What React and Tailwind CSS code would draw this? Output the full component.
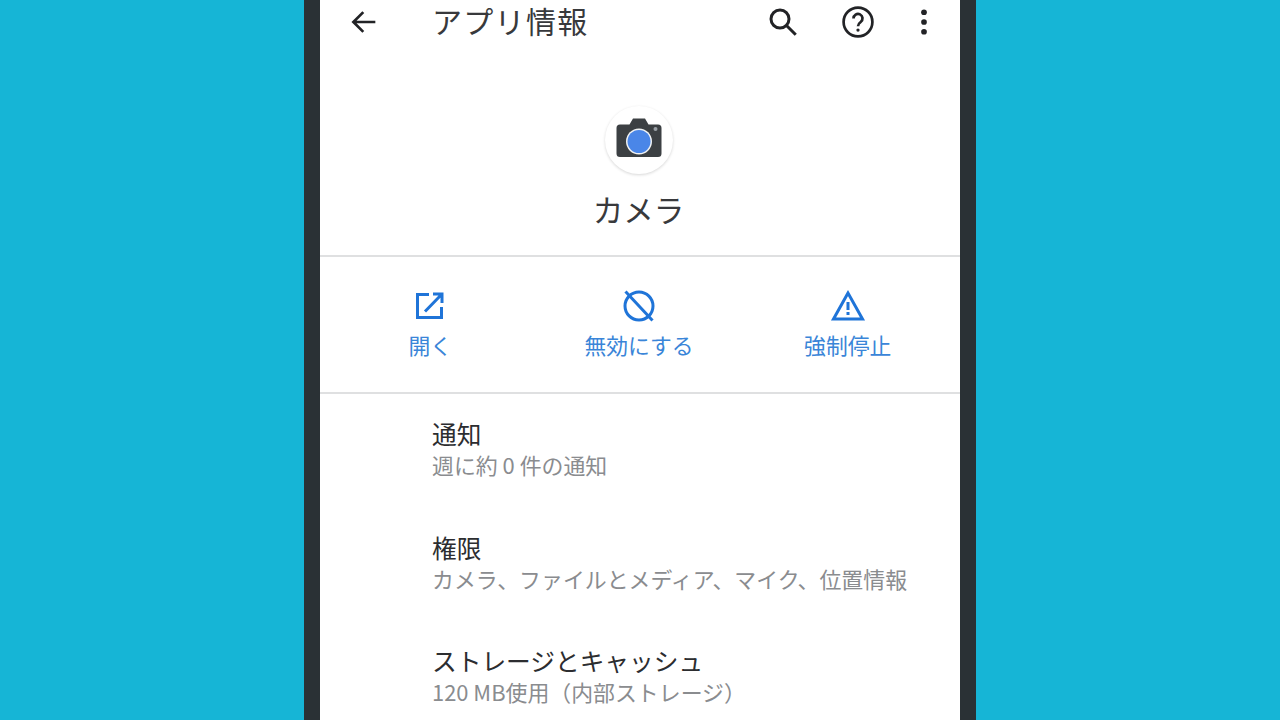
import React from 'react';

const jp = { fontFamily: '"Noto Sans CJK JP", "Noto Sans", sans-serif' };

const ActionButton = ({ icon, label }) => (
  <div className="flex-1 flex flex-col items-center">
    <div className="h-[34px] flex items-center justify-center">{icon}</div>
    <div className="mt-[6px] text-[21.8px] leading-[32px] text-[#3a85d8] font-normal">{label}</div>
  </div>
);

const InfoRow = ({ title, sub }) => (
  <div className="h-[113.5px] pl-[112px]">
    <div className="text-[24.7px] leading-[32px] text-[#2c2d30] font-normal whitespace-nowrap">{title}</div>
    <div className="mt-[1px] text-[21.9px] leading-[30px] text-[#8a8c8f] font-normal whitespace-nowrap">{sub}</div>
  </div>
);

export default function App() {
  return (
    <div className="w-[1280px] h-[720px] overflow-hidden bg-[#16b5d6] flex justify-center" style={jp}>
      <div className="w-[672px] h-full bg-[#2a3135] px-4">
        <div className="w-[640px] h-full bg-white">
          {/* toolbar */}
          <div className="h-[44px] flex items-center">
            <svg className="ml-[27px]" width="34" height="34" viewBox="0 0 24 24" fill="none" stroke="#222326" strokeWidth="1.9">
              <path d="M20 12H4.500M11.500 5l-7 7 7 7" />
            </svg>
            <div className="ml-[51px] mb-[4px] text-[30px] leading-[36px] text-[#38393c] font-normal tracking-[1.3px]">アプリ情報</div>
            <div className="ml-auto flex items-center">
              <svg className="-mt-[1px]" width="36" height="36" viewBox="0 0 24 24" fill="none" stroke="#222326" strokeWidth="2">
                <circle cx="10" cy="10" r="6" />
                <path d="M14.500 14.500L20.500 20.500" />
              </svg>
              <svg className="ml-[39px]" width="36" height="36" viewBox="0 0 24 24" fill="none" stroke="#222326" strokeWidth="1.8">
                <circle cx="12" cy="12" r="9.600" />
                <path d="M9 9.600a3 3 0 1 1 4.800 2.400c-1.100.8-1.800 1.400-1.800 2.800" />
                <circle cx="12" cy="17.400" r="1.100" fill="#222326" stroke="none" />
              </svg>
              <svg className="ml-[30px] mr-[18px]" width="36" height="36" viewBox="0 0 24 24" fill="#222326">
                <circle cx="12" cy="5.500" r="1.900" />
                <circle cx="12" cy="12" r="1.900" />
                <circle cx="12" cy="18.500" r="1.900" />
              </svg>
            </div>
          </div>

          {/* app header */}
          <div className="h-[213px] border-b-2 border-[#dfe0e1] flex flex-col items-center pr-[3px]">
            <div className="mt-[62px] w-[68px] h-[68px] rounded-full bg-white shadow-[0_1px_3px_rgba(0,0,0,0.16)] flex items-center justify-center">
              <svg width="46" height="40" viewBox="0 0 46 40" className="mb-[5px]">
                <path d="M4 6.500h9.500L17 0.500h12L32.500 6.500H42a3.500 3.500 0 0 1 3.500 3.500v25.500a3.500 3.500 0 0 1-3.500 3.500H4a3.500 3.500 0 0 1-3.500-3.500V10A3.500 3.500 0 0 1 4 6.500z" fill="#3c4043" />
                <circle cx="23" cy="23.500" r="13" fill="#f1f3f4" />
                <circle cx="23" cy="23.500" r="11.500" fill="#4a86e8" />
                <circle cx="39.500" cy="11" r="2" fill="#9aa0a6" />
              </svg>
            </div>
            <div className="mt-[13px] text-[30.5px] leading-[44px] text-[#38393c] font-normal">カメラ</div>
          </div>

          {/* actions */}
          <div className="h-[137px] border-b-2 border-[#dfe0e1] flex pt-[32px] pl-[6px] pr-[8px]">
            <ActionButton
              label="開く"
              icon={
                <svg width="36" height="36" viewBox="0 0 36 36" fill="none" stroke="#1f74d8" strokeWidth="3">
                  <path d="M17 6.500H5.500v23h24V19M21 6h9v9M29.500 6.500L13 23.500" />
                </svg>
              }
            />
            <ActionButton
              label="無効にする"
              icon={
                <svg width="36" height="36" viewBox="0 0 36 36" fill="none" stroke="#1f74d8" strokeWidth="3">
                  <circle cx="18" cy="18" r="14" />
                  <path d="M4.500 3.500l27 29" />
                </svg>
              }
            />
            <ActionButton
              label="強制停止"
              icon={
                <svg width="36" height="36" viewBox="0 0 36 36" fill="none" stroke="#1f74d8" strokeWidth="3">
                  <path d="M18 5L3.500 31h29z" />
                  <path d="M18 14v8M18 24v3" strokeWidth="3" />
                </svg>
              }
            />
          </div>

          {/* rows */}
          <div className="pt-[23px]">
            <InfoRow title="通知" sub="週に約 0 件の通知" />
            <InfoRow title="権限" sub="カメラ、ファイルとメディア、マイク、位置情報" />
            <InfoRow title="ストレージとキャッシュ" sub="120 MB使用（内部ストレージ）" />
          </div>
        </div>
      </div>
    </div>
  );
}
